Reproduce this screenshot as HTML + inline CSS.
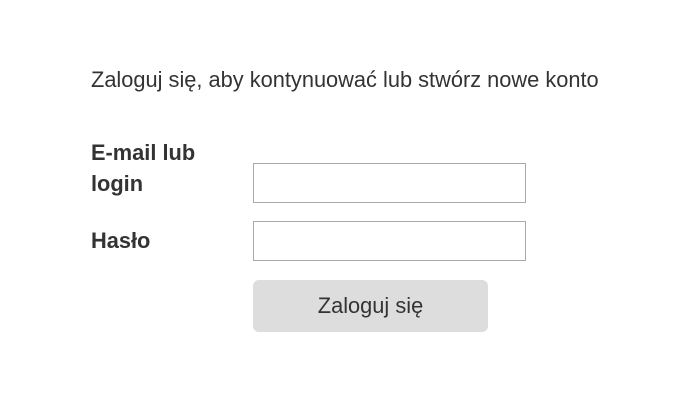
<!DOCTYPE html>
<html><head><meta charset="utf-8"><style>
body{margin:0;width:697px;height:403px;background:#fff;font-family:"Liberation Sans",sans-serif;color:#333;position:relative;overflow:hidden}
.t{position:absolute;left:91px;top:67px;font-size:21.8px;color:#333}
.l{position:absolute;left:91px;font-size:21.8px;font-weight:bold;color:#333;line-height:31px}
.i{position:absolute;left:253px;width:271px;height:38px;border:1px solid #aaa;background:#fff}
.b{position:absolute;left:253px;top:280px;width:235px;height:52px;background:#ddd;border-radius:6px;font-size:21.8px;text-align:center;line-height:52px;color:#333}
</style></head><body>
<div class="t">Zaloguj się, aby kontynuować lub stwórz nowe konto</div>
<div class="l" style="top:137px">E-mail lub<br>login</div>
<div class="i" style="top:163px"></div>
<div class="l" style="top:225px">Hasło</div>
<div class="i" style="top:221px"></div>
<div class="b">Zaloguj się</div>
</body></html>
